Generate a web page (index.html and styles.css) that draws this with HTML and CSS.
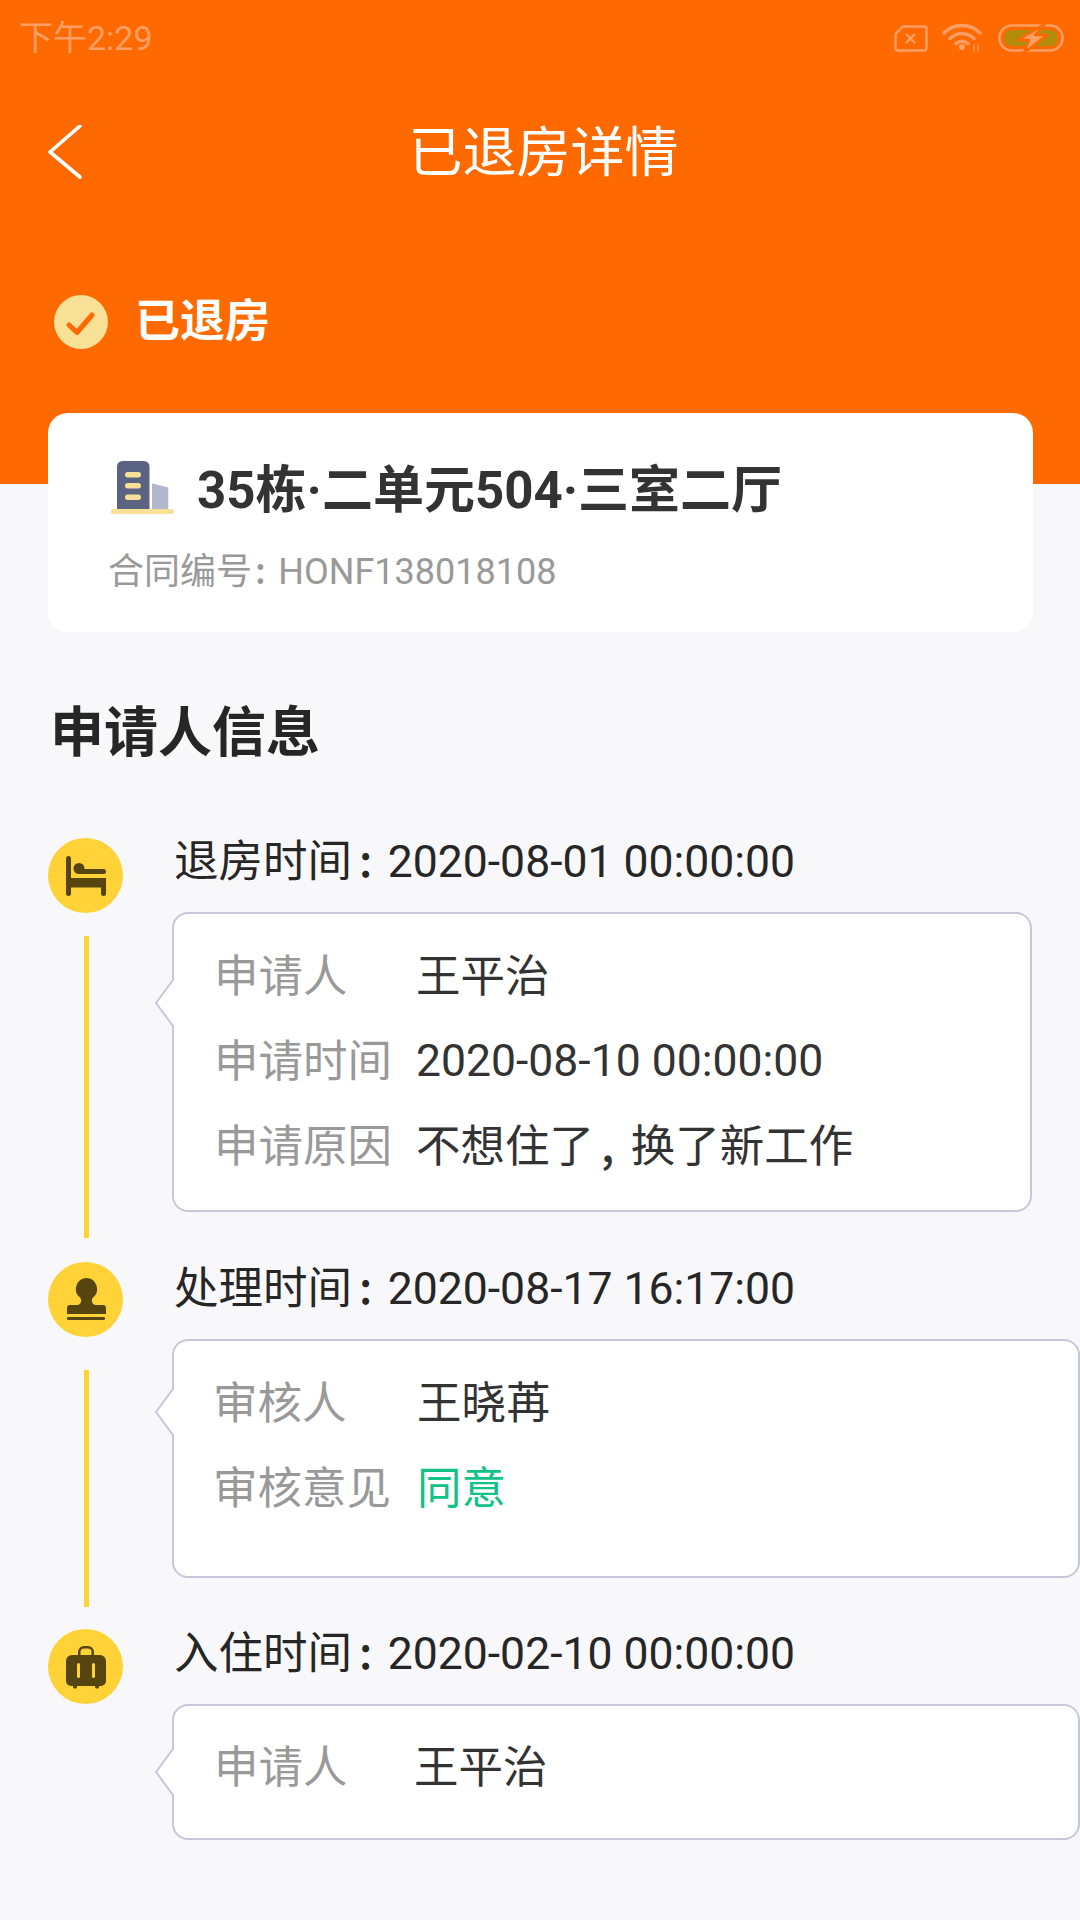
FILE: index.html
```html
<!DOCTYPE html>
<html lang="zh-CN">
<head>
<meta charset="utf-8">
<title>已退房详情</title>
<link rel="stylesheet" href="styles.css">
</head>
<body>
<div class="page">
  <header class="hero">
    <div class="statusbar">
      <span class="clock">下午2:29</span>
      <div class="status-icons">
        <svg class="ic-sim" viewBox="0 0 34 27" fill="none" stroke="currentColor" stroke-width="2.4"><path d="M9 1.500H30a2.500 2.500 0 0 1 2.500 2.500V23a2.500 2.500 0 0 1-2.500 2.500H4A2.500 2.500 0 0 1 1.500 23V9Z"/><path d="M12 9l9 9M21 9l-9 9"/></svg>
        <svg class="ic-wifi" viewBox="0 0 42 30" fill="none" stroke="currentColor" stroke-width="3.4" stroke-linecap="round"><path d="M2 10C12 0 28 0 38 10"/><path d="M8 15.500C15 9 25 9 32 15.500"/><path d="M14 20.500C17.500 17.500 22.500 17.500 26 20.500"/><path d="M20 24h0" stroke-width="6"/><path d="M32 22v7M36 21v7" stroke-width="1.600" opacity=".7"/></svg>
        <svg class="ic-batt" viewBox="0 0 66 30"><rect x="1.500" y="2.500" width="63" height="25" rx="12.500" fill="none" stroke="currentColor" stroke-width="2.600"/><rect x="6" y="7" width="54" height="16" rx="8" fill="#b38b0d"/><path d="M47 1 20 17h11l-5 13 23-18H37Z" fill="currentColor" stroke="#ff6a00" stroke-width="2.500" stroke-linejoin="round"/></svg>
      </div>
    </div>
    <div class="navbar">
      <svg class="ic-back" viewBox="0 0 34 56" fill="none" stroke="#fff" stroke-width="3.600" stroke-linecap="round" stroke-linejoin="round"><path d="M32 1 2 27l30 25"/></svg>
      <h1 class="nav-title">已退房详情</h1>
    </div>
    <div class="state">
      <svg class="ic-check" viewBox="0 0 54 54"><circle cx="27" cy="27" r="27" fill="#f9e097"/><path d="M15 30l8 7.500L38 20" fill="none" stroke="#ff6a00" stroke-width="5" stroke-linecap="round" stroke-linejoin="round"/></svg>
      <span class="state-text">已退房</span>
    </div>
  </header>

  <section class="room-card">
    <div class="room-name">
      <svg class="ic-building" viewBox="0 0 63 53"><path d="M6 5.500A5.500 5.500 0 0 1 11.500 0H33a5.500 5.500 0 0 1 5.500 5.500V48H6Z" fill="#5a6482"/><rect x="14" y="11" width="16" height="5.500" rx="2.700" fill="#f9e097"/><rect x="14" y="22" width="16" height="5.500" rx="2.700" fill="#f9e097"/><rect x="14" y="33.500" width="16" height="5.500" rx="2.700" fill="#f9e097"/><path d="M41 23.500a1 1 0 0 1 1.300-.8L57.300 26.500V50H41Z" fill="#b1b8cd"/><rect x="0" y="48" width="63" height="5" rx="2.500" fill="#f9e097"/></svg>
      <span class="room-text">35栋·二单元504·三室二厅</span>
    </div>
    <p class="contract">合同编号<span class="mark">:</span>HONF138018108</p>
  </section>

  <h2 class="section-title">申请人信息</h2>

  <div class="timeline">
    <article class="item item-a">
      <div class="rail">
        <span class="dot"><svg viewBox="0 0 40 40"><g fill="#574510"><rect x="0" y="0" width="5" height="40" rx="2.500"/><rect x="2" y="22" width="38" height="9.500"/><rect x="35" y="22" width="5" height="18" rx="2.500"/><circle cx="13" cy="12.500" r="5.500"/><path d="M13 13H37.500a2.500 2.500 0 0 1 0 5H13Z"/></g></svg></span>
        <span class="line"></span>
      </div>
      <div class="body">
        <h3 class="item-title">退房时间<span class="mark">:</span>2020-08-01 00:00:00</h3>
        <div class="panel">
          <svg class="notch" viewBox="0 0 19 46"><path d="M18 0 1 23l17 23" fill="#fff" stroke="#c5c8d8" stroke-width="2"/><rect x="18" y="1" width="1" height="44" fill="#fff"/></svg>
          <div class="row"><span class="key">申请人</span><span class="val">王平治</span></div>
          <div class="row"><span class="key">申请时间</span><span class="val val-num">2020-08-10 00:00:00</span></div>
          <div class="row"><span class="key">申请原因</span><span class="val">不想住了<span class="mark">,</span>换了新工作</span></div>
        </div>
      </div>
    </article>

    <article class="item item-b">
      <div class="rail">
        <span class="dot"><svg viewBox="0 0 40 44"><g fill="#574510"><path d="M20 0a11 11 0 0 1 7 19.500c-2 2-1.500 6.500 2 7.500h8a3 3 0 0 1 3 3v6H1v-6a3 3 0 0 1 3-3h8c3.500-1 4-5.500 2-7.500A11 11 0 0 1 20 0Z"/><rect x="1" y="39" width="38" height="3" rx="1.200"/></g></svg></span>
        <span class="line"></span>
      </div>
      <div class="body">
        <h3 class="item-title">处理时间<span class="mark">:</span>2020-08-17 16:17:00</h3>
        <div class="panel">
          <svg class="notch" viewBox="0 0 19 46"><path d="M18 0 1 23l17 23" fill="#fff" stroke="#c5c8d8" stroke-width="2"/><rect x="18" y="1" width="1" height="44" fill="#fff"/></svg>
          <div class="row"><span class="key">审核人</span><span class="val">王晓苒</span></div>
          <div class="row"><span class="key">审核意见</span><span class="val agree">同意</span></div>
        </div>
      </div>
    </article>

    <article class="item item-c">
      <div class="rail">
        <span class="dot"><svg viewBox="0 0 40 44"><g fill="#574510"><path d="M12 11V7a6 6 0 0 1 6-6h4a6 6 0 0 1 6 6v4h-2.500V7A3.500 3.500 0 0 0 22 3.500h-4A3.500 3.500 0 0 0 14.500 7v4Z"/><path d="M6 10H34a6 6 0 0 1 6 6v20a5 5 0 0 1-5 5H5a5 5 0 0 1-5-5V16a6 6 0 0 1 6-6Z"/><rect x="7" y="40" width="4" height="3.500" rx="1.500"/><rect x="29" y="40" width="4" height="3.500" rx="1.500"/></g><rect x="11" y="18" width="3" height="15" rx="1.500" fill="#ffd238"/><rect x="26" y="18" width="3" height="15" rx="1.500" fill="#ffd238"/></svg></span>
      </div>
      <div class="body">
        <h3 class="item-title">入住时间<span class="mark">:</span>2020-02-10 00:00:00</h3>
        <div class="panel">
          <svg class="notch" viewBox="0 0 19 46"><path d="M18 0 1 23l17 23" fill="#fff" stroke="#c5c8d8" stroke-width="2"/><rect x="18" y="1" width="1" height="44" fill="#fff"/></svg>
          <div class="row"><span class="key">申请人</span><span class="val">王平治</span></div>
        </div>
      </div>
    </article>
  </div>
</div>
</body>
</html>
```
FILE: styles.css
```css
* { box-sizing: border-box; }
html, body { margin: 0; padding: 0; }
body {
  background: #f8f8fb;
  font-family: Roboto, "Noto Sans CJK SC", sans-serif;
  color: #333;
}
.page { width: 1080px; height: 1920px; overflow: hidden; background: #f8f8fb; }

.mark { font-family: "Noto Sans CJK SC", sans-serif; font-weight: 500; line-height: 0; margin: 0 15.5px 0 7px; }

/* header */
.hero { height: 484px; background: #ff6a00; color: #fff; padding-top: 20px; }
.statusbar { height: 36px; padding: 0 16px 0 19px; display: flex; justify-content: space-between; align-items: center; color: #ff9f66; }
.clock { font-size: 34px; line-height: 36px; }
.status-icons { display: flex; align-items: center; gap: 14px; }
.ic-sim { width: 34px; height: 27px; display: block; }
.ic-wifi { width: 42px; height: 30px; display: block; }
.ic-batt { width: 66px; height: 30px; display: block; }

.navbar { position: relative; height: 60px; margin-top: 68px; display: flex; align-items: center; justify-content: center; padding-left: 7px; }
.ic-back { position: absolute; left: 48px; top: 1px; width: 34px; height: 56px; }
.nav-title { margin: 0; font-size: 54px; line-height: 60px; font-weight: 400; }

.state { display: flex; align-items: center; gap: 27px; margin-top: 111px; padding-left: 54px; }
.ic-check { width: 54px; height: 54px; display: block; }
.state-text { font-size: 45px; line-height: 54px; font-weight: 700; }

/* room card */
.room-card { margin: -71px 47px 0 48px; position: relative; height: 219px; background: #fff; border-radius: 20px; padding: 48px 0 0 62px; }
.room-name { display: flex; align-items: flex-start; gap: 23px; height: 53px; font-size: 51px; line-height: 53px; font-weight: 700; color: #333; }
.room-text { margin-top: 3px; }
.ic-building { width: 63px; height: 53px; display: block; flex: none; margin-left: 1px; }
.contract { margin: 34px 0 0 -2px; font-size: 36px; line-height: 48px; color: #999; }
.contract .mark { margin: 0 12.5px 0 3px; }

.section-title { margin: 69px 0 0 50px; font-size: 54px; line-height: 66px; font-weight: 700; color: #262626; }

/* timeline */
.timeline { margin-top: 71px; padding-left: 48px; }
.item { display: flex; }
.item-a { height: 424px; }
.item-b { height: 367px; }
.rail { width: 75px; flex: none; display: flex; flex-direction: column; align-items: center; }
.dot { width: 75px; height: 75px; border-radius: 50%; background: #ffd238; display: flex; align-items: center; justify-content: center; flex: none; }
.dot svg { display: block; }
.item-a .dot svg { width: 40px; height: 40px; }
.item-b .dot svg, .item-c .dot svg { width: 40px; height: 44px; }
.line { width: 5px; flex: 1; background: #ffd238; margin-left: 2px; }
.item-a .line { margin-top: 23px; margin-bottom: 24px; }
.item-b .line { margin-top: 33px; margin-bottom: 22px; }

.body { margin-left: 49px; flex: none; }
.item-title { margin: 0 0 26px 2px; font-size: 44.5px; line-height: 48px; font-weight: 400; color: #262626; }
.item-b .item-title { padding-top: 3px; }
.item-c .item-title { padding-top: 1px; }

.panel { position: relative; background: #fff; border: 2px solid #c5c8d8; border-radius: 16px; padding: 19px 0 0 40px; width: 908px; }
.item-a .panel { width: 860px; height: 300px; }
.item-b .panel { height: 239px; padding-top: 18px; padding-left: 39px; }
.item-c .panel { height: 136px; padding-top: 17px; margin-top: 1px; }
.notch { position: absolute; left: -19px; width: 19px; height: 46px; }
.item-a .notch { top: 66px; }
.item-b .notch { top: 48px; }
.item-c .notch { top: 43px; }

.row { display: flex; height: 85px; align-items: center; font-size: 44.5px; }
.key { width: 201px; color: #999; flex: none; padding-bottom: 4px; }
.item-a .key { width: 202px; padding-bottom: 7px; }
.item-b .key { width: 204px; }
.item-c .key { width: 200px; }
.val { color: #333; padding-bottom: 4px; }
.item-a .val { padding-bottom: 7px; }
.item-a .val-num { padding-bottom: 0; }
.val .mark { margin-right: 16.5px; }
.agree { color: #12c287; }
```
